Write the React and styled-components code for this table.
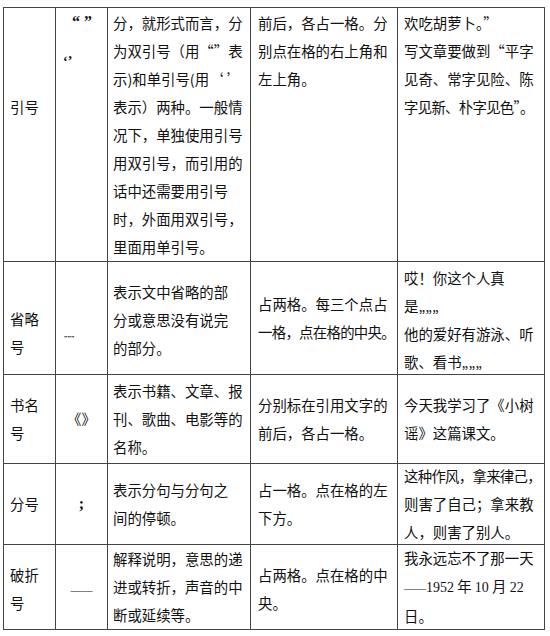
import React from "react";
import styled, { createGlobalStyle } from "styled-components";

const Global = createGlobalStyle`
  html, body {
    margin: 0;
    padding: 0;
    background: #fff;
  }
  body {
    font-family: "Noto Sans CJK SC", "Noto Sans", sans-serif;
    color: #111;
  }
`;

const Table = styled.div`
  display: grid;
  grid-template-columns: 51px 51px 142px 146px 146px;
  grid-template-rows: 253px 112px 88px 80px 84px;
  gap: 1px;
  width: max-content;
  margin: 7px 0 0 3px;
  background: #444;
  border: 1px solid #444;
`;

const Cell = styled.div`
  background: #fff;
  display: flex;
  flex-direction: column;
  justify-content: ${(p) => (p.$top ? "flex-start" : "center")};
  align-items: ${(p) => (p.$center ? "center" : "flex-start")};
  padding: ${(p) => p.$pt || 0}px 0 0 ${(p) => p.$pl ?? 6}px;
  font-size: 14.4px;
  overflow: visible;
`;

const Line = styled.span`
  display: block;
  white-space: nowrap;
  line-height: 28px;
  letter-spacing: ${(p) => (p.$tight ? "-0.7px" : "0")};
`;

const Mark = styled.span`
  display: block;
  font-family: "Liberation Serif", serif;
  font-weight: bold;
  font-size: ${(p) => p.$size || 13}px;
  line-height: ${(p) => p.$lh || 28}px;
  margin-left: ${(p) => p.$ml || 0}px;
`;

const Latin = styled.span`
  font-family: "Liberation Serif", serif;
  font-size: 14px;
`;

const Dashes = styled.span`
  font-family: "Liberation Serif", serif;
  font-size: 11px;
`;

const Lines = ({ items, tight = [] }) =>
  items.map((t, i) => (
    <Line key={i} $tight={tight.includes(i)}>
      {t}
    </Line>
  ));

export default function App() {
  return (
    <>
      <Global />
      <Table>
        {/* 引号 */}
        <Cell $top $pt={85}>
          <Line>引号</Line>
        </Cell>
        <Cell $top $pl={0}>
          <Mark $ml={16} $size={16} $lh={28}>“ ”</Mark>
          <Mark $ml={7} $size={14} $lh={52}>‘’</Mark>
        </Cell>
        <Cell $top $pt={1} $pl={5}>
          <Lines
            items={[
              "分，就形式而言，分",
              "为双引号（用“”表",
              "示)和单引号(用‘ ’",
              "表示）两种。一般情",
              "况下，单独使用引号",
              "用双引号，而引用的",
              "话中还需要用引号",
              "时，外面用双引号，",
              "里面用单引号。",
            ]}
          />
        </Cell>
        <Cell $top $pt={1} $pl={7}>
          <Lines items={["前后，各占一格。分", "别点在格的右上角和", "左上角。"]} />
        </Cell>
        <Cell $top $pt={1} $pl={6}>
          <Lines
            items={[
              "欢吃胡萝卜。”",
              "写文章要做到“平字",
              "见奇、常字见险、陈",
              "字见新、朴字见色”。",
            ]}
            tight={[3]}
          />
        </Cell>

        {/* 省略号 */}
        <Cell $pt={29}>
          <Lines items={["省略", "号"]} />
        </Cell>
        <Cell $top $pl={0} $pt={59}>
          <Mark $ml={8} $size={7}>„„„</Mark>
        </Cell>
        <Cell $pl={5} $pt={4}>
          <Lines items={["表示文中省略的部", "分或意思没有说完", "的部分。"]} />
        </Cell>
        <Cell $pl={7}>
          <Lines items={["占两格。每三个点占", "一格，点在格的中央。"]} tight={[1]} />
        </Cell>
        <Cell $pl={6} $pt={4}>
          <Lines items={["哎！你这个人真", "是„„„", "他的爱好有游泳、听", "歌、看书„„„"]} />
        </Cell>

        {/* 书名号 */}
        <Cell>
          <Lines items={["书名", "号"]} />
        </Cell>
        <Cell $center $pl={0}>
          <Line>《》</Line>
        </Cell>
        <Cell $pl={5}>
          <Lines items={["表示书籍、文章、报", "刊、歌曲、电影等的", "名称。"]} />
        </Cell>
        <Cell $pl={7}>
          <Lines items={["分别标在引用文字的", "前后，各占一格。"]} />
        </Cell>
        <Cell $pl={6}>
          <Lines items={["今天我学习了《小树", "谣》这篇课文。"]} />
        </Cell>

        {/* 分号 */}
        <Cell>
          <Line>分号</Line>
        </Cell>
        <Cell $center $pl={0}>
          <Mark $size={16}>;</Mark>
        </Cell>
        <Cell $pl={5}>
          <Lines items={["表示分句与分句之", "间的停顿。"]} />
        </Cell>
        <Cell $pl={7}>
          <Lines items={["占一格。点在格的左", "下方。"]} />
        </Cell>
        <Cell $pl={6}>
          <Lines
            items={["这种作风，拿来律己，", "则害了自己；拿来教", "人，则害了别人。"]}
            tight={[0]}
          />
        </Cell>

        {/* 破折号 */}
        <Cell $pt={4}>
          <Lines items={["破折", "号"]} />
        </Cell>
        <Cell $center $pl={0} $pt={4}>
          <Line>
            <Dashes>——</Dashes>
          </Line>
        </Cell>
        <Cell $pl={5}>
          <Lines items={["解释说明，意思的递", "进或转折，声音的中", "断或延续等。"]} />
        </Cell>
        <Cell $pl={7} $pt={4}>
          <Lines items={["占两格。点在格的中", "央。"]} />
        </Cell>
        <Cell $pl={6}>
          <Line>我永远忘不了那一天</Line>
          <Line>
            <Dashes>——</Dashes>
            <Latin>1952</Latin> 年 <Latin>10</Latin> 月 <Latin>22</Latin>
          </Line>
          <Line>日。</Line>
        </Cell>
      </Table>
    </>
  );
}
